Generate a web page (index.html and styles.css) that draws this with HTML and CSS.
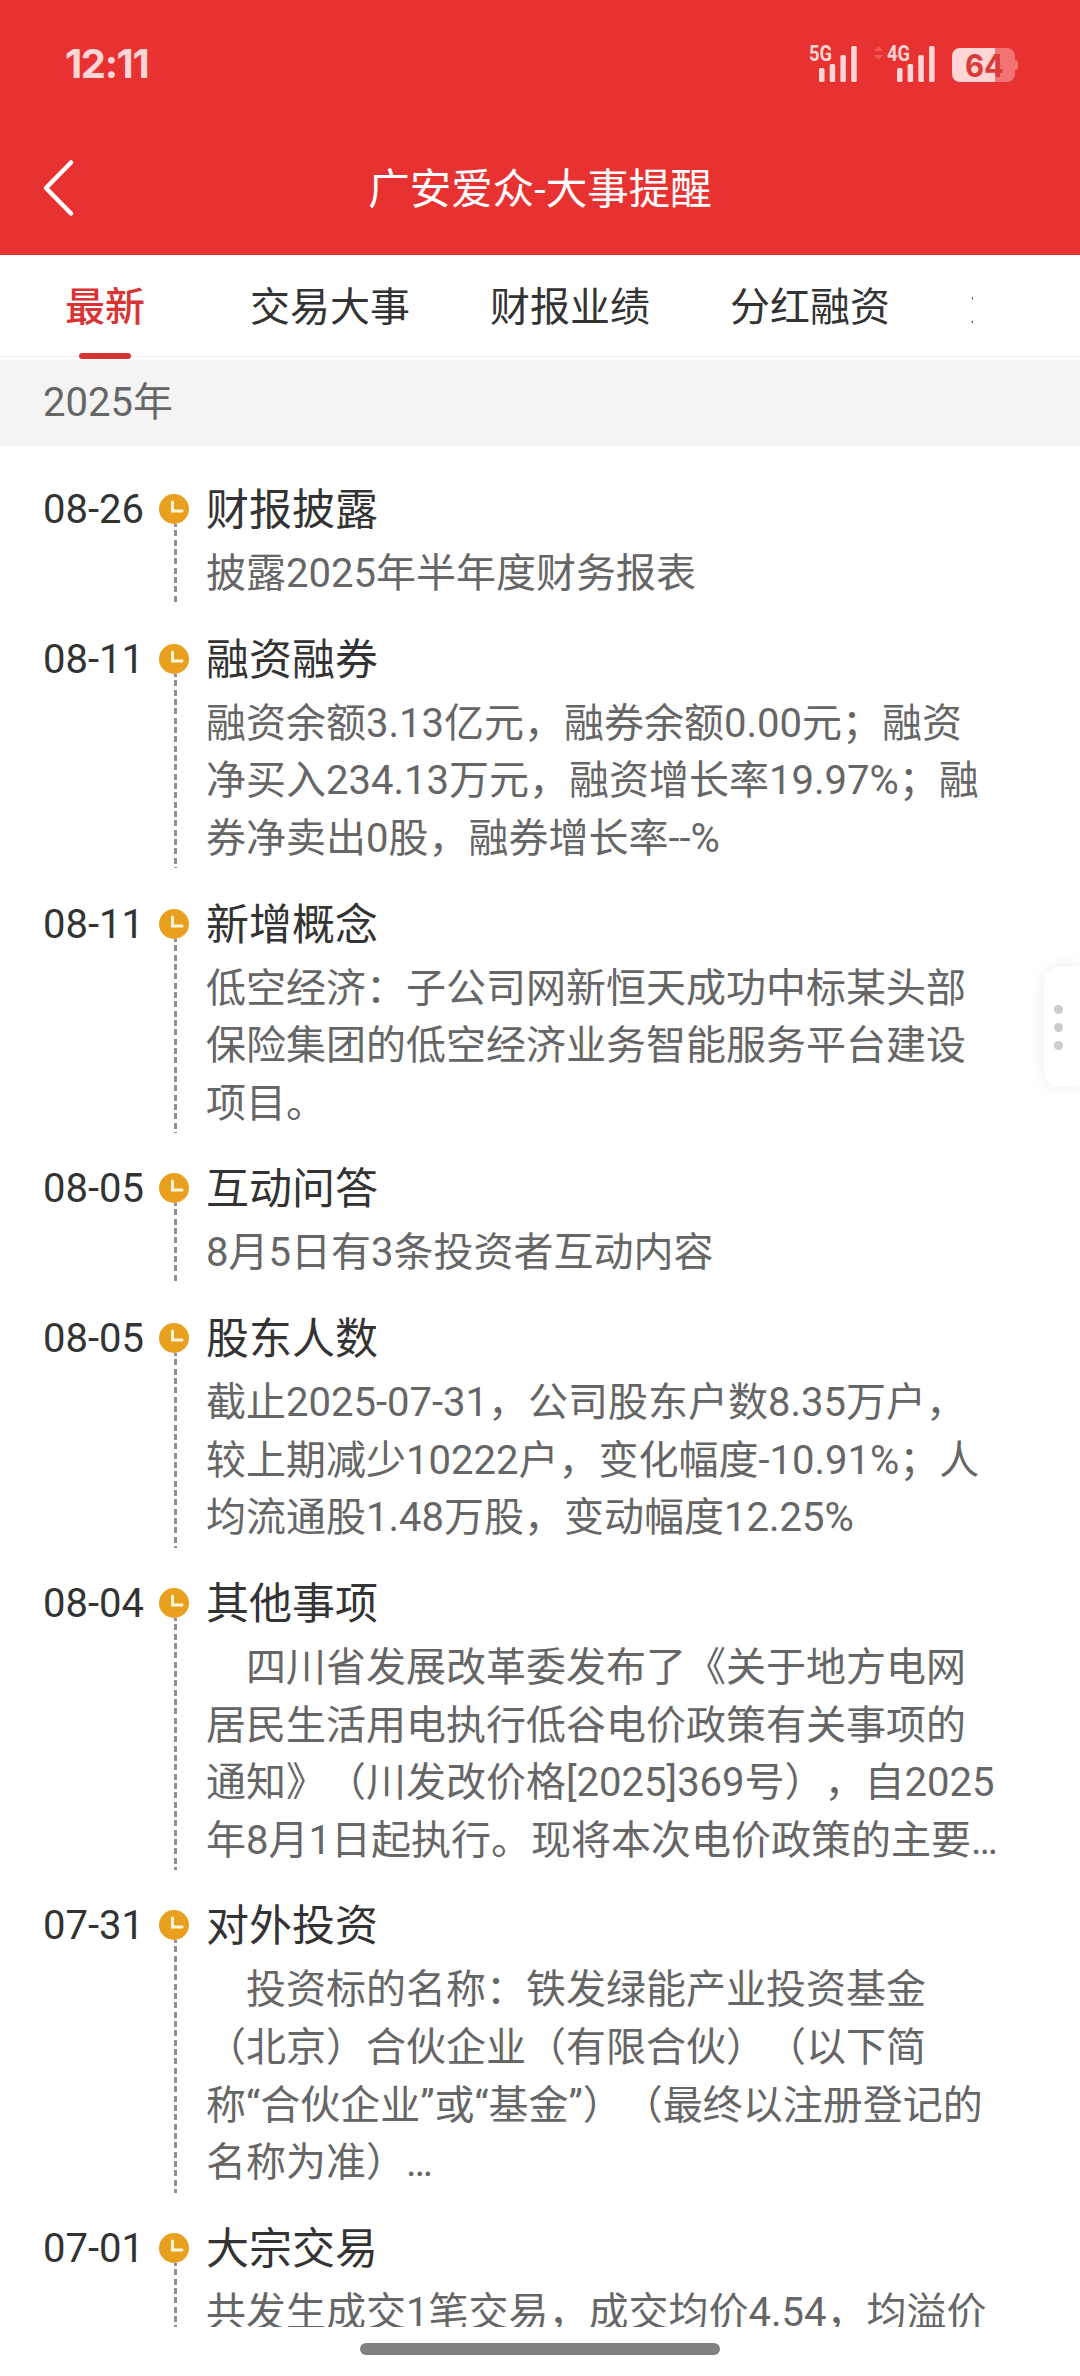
FILE: index.html
```html
<!DOCTYPE html>
<html lang="zh-CN">

<head>
    <meta charset="UTF-8">
    <meta name="viewport" content="width=device-width, initial-scale=1.0">
    <title>广安爱众-大事提醒</title>
    <link rel="stylesheet" href="styles.css">
</head>

<body>
    <header class="header">
        <div class="status-bar">
            <span class="time">12:11</span>
            <svg class="status-icons" width="212" height="40" viewBox="0 0 212 40">
                <g fill="#ffd5d5">
                    <text class="net" x="2" y="17" textLength="23" lengthAdjust="spacingAndGlyphs">5G</text>
                    <rect x="12" y="24" width="5.5" height="14" rx="1.5" />
                    <rect x="22.7" y="20" width="5.5" height="18" rx="1.5" />
                    <rect x="33.4" y="11" width="5.5" height="27" rx="1.5" />
                    <rect x="44.2" y="2" width="5.5" height="36" rx="1.5" />
                    <text class="net" x="80" y="17" textLength="23" lengthAdjust="spacingAndGlyphs">4G</text>
                    <rect x="90" y="24" width="5.5" height="14" rx="1.5" />
                    <rect x="100.6" y="20" width="5.5" height="18" rx="1.5" />
                    <rect x="111.3" y="11" width="5.5" height="27" rx="1.5" />
                    <rect x="122.1" y="2" width="5.5" height="36" rx="1.5" />
                </g>
                <path fill="#f05656" d="M66.5 7L71.5 2L76.5 7ZM66.5 11L71.5 16L76.5 11Z" />
                <path fill="#f37373" d="M188 4h12a8 8 0 0 1 8 8v3.500q3 1 3 3v5q0 2-3 3v3.500a8 8 0 0 1-8 8h-12z" />
                <path fill="#ffd5d5" d="M188 4h-35a8 8 0 0 0-8 8v18a8 8 0 0 0 8 8h35z" />
                <text class="battery" x="158" y="32.500" textLength="39" lengthAdjust="spacingAndGlyphs">64</text>
            </svg>
        </div>
        <div class="nav">
            <svg class="back" width="40" height="60" viewBox="0 0 40 60">
                <path d="M31 4.500L6 30L31 55.500" fill="none" stroke="#fff" stroke-width="4.500" stroke-linecap="round" stroke-linejoin="round" />
            </svg>
            <h1>广安爱众-大事提醒</h1>
        </div>
    </header>

    <nav class="tabs">
        <div class="tabs-scroll">
            <a class="tab active">最新</a>
            <a class="tab">交易大事</a>
            <a class="tab">财报业绩</a>
            <a class="tab">分红融资</a>
            <a class="tab">龙虎榜</a>
        </div>
    </nav>

    <div class="year">2025年</div>

    <main class="timeline" id="timeline"></main>

    <footer class="home">
        <div class="home-bar"></div>
    </footer>

    <div class="side-handle"><i></i><i></i><i></i></div>

    <script src="main.js"></script>
</body>

</html>
```
FILE: styles.css
```css
:root {
    --red: #e83131;
    --active: #d93434;
    --text: #333;
    --sub: #666;
}

* {
    box-sizing: border-box;
}

body {
    margin: 0;
    height: 2376px;
    display: flex;
    flex-direction: column;
    overflow: hidden;
    background: #fff;
    color: var(--text);
    font-family: Roboto, "Noto Sans CJK SC", sans-serif;
    font-size: 40px;
    text-spacing-trim: space-all;
}

.header {
    height: 255px;
    flex: none;
    background: var(--red);
    color: #fff;
}

.status-bar {
    height: 128px;
    padding: 0 61px 0 65px;
    display: flex;
    justify-content: space-between;
    align-items: center;
}

.time {
    padding-bottom: 2px;
    color: #ffd5d5;
    font-family: Inter, sans-serif;
    font-weight: 700;
    font-size: 40px;
    letter-spacing: -1.4px;
}

.status-icons {
    overflow: visible;
}

.net {
    font-family: Roboto, sans-serif;
    font-weight: 700;
    font-size: 22px;
}

.battery {
    font-family: Inter, sans-serif;
    font-weight: 700;
    font-size: 31px;
    fill: #d93a3a;
}

.nav {
    height: 120px;
    display: grid;
    grid-template-columns: 40px 1fr 40px;
    align-items: center;
    padding: 0 40px;
}

.nav h1 {
    margin: 0;
    padding-bottom: 4px;
    text-align: center;
    font-size: 41.5px;
    font-weight: 400;
}

.tabs {
    height: 105px;
    flex: none;
    padding-right: 107px;
    background: linear-gradient(#eee, #eee) 0 101px / 100% 1px no-repeat;
}

.tabs-scroll {
    height: 105px;
    display: flex;
    overflow: hidden;
}

.tab {
    flex: none;
    padding: 0 40px;
    line-height: 105px;
    white-space: nowrap;
}

.tab.active {
    width: 210px;
    padding: 0;
    display: flex;
    flex-direction: column;
    align-items: center;
    color: var(--active);
    font-weight: 500;
}

.tab.active::after {
    content: "";
    width: 52px;
    height: 6px;
    margin-top: -7px;
    border-radius: 3px;
    background: var(--active);
}

.year {
    height: 86px;
    flex: none;
    padding-left: 43px;
    line-height: 86px;
    background: #f4f4f4;
    color: var(--sub);
}

.timeline {
    flex: 1;
    min-height: 0;
    overflow: hidden;
    padding-top: 32px;
}

.item {
    display: grid;
    grid-template-columns: 116px 30px 1fr;
    padding-left: 43px;
    padding-bottom: 24.1px;
}

.date {
    line-height: 64px;
}

.mark {
    display: flex;
    flex-direction: column;
    padding-top: 16px;
}

.clock {
    flex: none;
    display: block;
}

.line {
    flex: 1;
    width: 3px;
    margin-left: 15px;
    background: repeating-linear-gradient(#8f8f8f 0 3px, transparent 3px 6.33px, #8f8f8f 6.33px 9.33px);
}

.content {
    padding: 0 0 1px 17px;
    white-space: nowrap;
}

.content h2 {
    margin: 0 0 3px;
    font-size: 43px;
    font-weight: 400;
    line-height: 64px;
}

.content p {
    margin: 0;
    line-height: 57.6px;
    color: var(--sub);
    white-space: pre;
}

.home {
    flex: none;
    height: 49px;
    padding-top: 16px;
}

.home-bar {
    width: 360px;
    height: 12px;
    margin: 0 auto;
    border-radius: 6px;
    background: #808080;
}

.side-handle {
    position: absolute;
    top: 967px;
    right: 0;
    width: 36px;
    height: 120px;
    padding-left: 10px;
    display: flex;
    flex-direction: column;
    justify-content: center;
    gap: 9px;
    border-radius: 15px 0 0 15px;
    background: #fff;
    box-shadow: 0 0 16px rgba(0, 0, 0, 0.08);
}

.side-handle i {
    width: 9px;
    height: 9px;
    border-radius: 50%;
    background: #ccc;
}
```
FILE: main.js
```js
const events = [
    ["08-26", "财报披露", ["披露2025年半年度财务报表"]],
    ["08-11", "融资融券", [
        "融资余额3.13亿元，融券余额0.00元；融资",
        "净买入234.13万元，融资增长率19.97%；融",
        "券净卖出0股，融券增长率--%"
    ]],
    ["08-11", "新增概念", [
        "低空经济：子公司网新恒天成功中标某头部",
        "保险集团的低空经济业务智能服务平台建设",
        "项目。"
    ]],
    ["08-05", "互动问答", ["8月5日有3条投资者互动内容"]],
    ["08-05", "股东人数", [
        "截止2025-07-31，公司股东户数8.35万户，",
        "较上期减少10222户，变化幅度-10.91%；人",
        "均流通股1.48万股，变动幅度12.25%"
    ]],
    ["08-04", "其他事项", [
        "　四川省发展改革委发布了《关于地方电网",
        "居民生活用电执行低谷电价政策有关事项的",
        "通知》（川发改价格[2025]369号），自2025",
        "年8月1日起执行。现将本次电价政策的主要…"
    ]],
    ["07-31", "对外投资", [
        "　投资标的名称：铁发绿能产业投资基金",
        "（北京）合伙企业（有限合伙）（以下简",
        "称“合伙企业”或“基金”）（最终以注册登记的",
        "名称为准）…"
    ]],
    ["07-01", "大宗交易", [
        "共发生成交1笔交易，成交均价4.54，均溢价"
    ]]
];

const clock = `<svg class="clock" width="30" height="30" viewBox="0 0 30 30">
    <circle cx="15" cy="15" r="15" fill="#eaa01f" />
    <path d="M13.500 8v9h9.500" fill="none" stroke="#fff6dc" stroke-width="3" stroke-linecap="round" />
</svg>`;

document.getElementById("timeline").innerHTML = events.map(([date, title, lines]) => `
    <section class="item">
        <div class="date">${date}</div>
        <div class="mark">${clock}<div class="line"></div></div>
        <div class="content"><h2>${title}</h2><p>${lines.join("\n")}</p></div>
    </section>`).join("");
```
